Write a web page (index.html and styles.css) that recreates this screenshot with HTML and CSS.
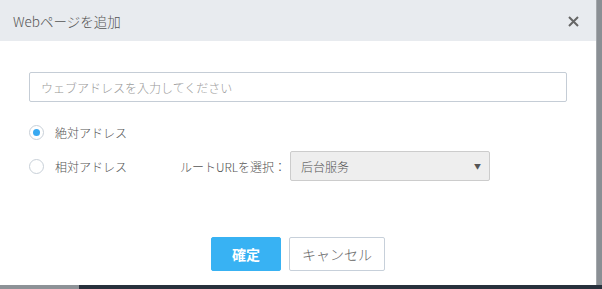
FILE: index.html
```html
<!DOCTYPE html>
<html lang="ja">
<head>
<meta charset="utf-8">
<title>Webページを追加</title>
<link rel="stylesheet" href="styles.css">
</head>
<body>
<div class="stage">
  <div class="dialog">
    <div class="header">
      <span class="title">Webページを追加</span>
      <svg class="close" width="11" height="11" viewBox="0 0 11 11"><path d="M1 1L10 10M10 1L1 10" stroke="#666" stroke-width="2" stroke-linecap="butt"/></svg>
    </div>
    <div class="body">
      <div class="input">ウェブアドレスを入力してください</div>
      <div class="row row-first">
        <span class="radio checked"></span>
        <span class="label">絶対アドレス</span>
      </div>
      <div class="row row-second">
        <span class="radio"></span>
        <span class="label label-rel">相対アドレス</span>
        <span class="label">ルートURLを選択：</span>
        <div class="select"><span>后台服务</span><span class="arrow">&#9660;</span></div>
      </div>
    </div>
    <div class="footer">
      <button class="btn primary">確定</button>
      <button class="btn">キャンセル</button>
    </div>
  </div>
  <div class="side"></div>
</div>
<div class="bottom"><div class="b1"></div><div class="b2"></div></div>
</body>
</html>
```
FILE: styles.css
```css
* { box-sizing: border-box; }
html, body { margin: 0; padding: 0; }
body {
  width: 602px;
  height: 289px;
  overflow: hidden;
  background: #8c9196;
  font-family: "Noto Sans CJK JP", "Noto Sans", sans-serif;
  color: #555;
}
.stage { display: flex; height: 285px; }
.dialog {
  width: 596px;
  height: 285px;
  background: #fff;
  display: flex;
  flex-direction: column;
}
.side { flex: 1; background: #8a8f94; border-left: 1px solid #a4a8ac; }
.bottom { display: flex; height: 4px; }
.b1 { width: 79px; background: #8d9297; }
.b2 { flex: 1; background: #28313c; }
.header {
  height: 41px;
  background: #e8ebef;
  display: flex;
  align-items: center;
  justify-content: space-between;
  padding: 0 17px 0 13px;
}
.title { font-size: 13.5px; color: #555; font-weight: 300; }
.close { display: block; margin-top: 1px; }
.body { padding: 31px 29px 0 29px; height: 196px; }
.input {
  width: 538px;
  height: 30px;
  border: 1px solid #c5cdd6;
  border-radius: 2px;
  padding: 0 11px;
  display: flex;
  align-items: center;
  font-size: 12px;
  color: #999;
  font-weight: 300;
}
.row { display: flex; align-items: center; }
.row-first { margin-top: 22px; height: 16px; }
.row-second { margin-top: 11px; height: 30px; }
.radio {
  width: 15px;
  height: 15px;
  border-radius: 50%;
  border: 1px solid #c8d0d8;
  margin-right: 11px;
  flex: none;
  position: relative;
}
.radio.checked::after {
  content: "";
  position: absolute;
  left: 3px; top: 3px;
  width: 7px; height: 7px;
  border-radius: 50%;
  background: #38a9f1;
}
.label { font-size: 12px; color: #555; font-weight: 300; }
.label-rel { width: 125px; }
.select {
  margin-left: 4px;
  width: 200px;
  height: 30px;
  background: #eee;
  border: 1px solid #ccc;
  border-radius: 2px;
  display: flex;
  align-items: center;
  justify-content: space-between;
  padding: 0 8px 0 10px;
  font-size: 12px;
  color: #555;
  font-weight: 300;
}
.arrow { font-size: 7px; color: #555; }
.footer {
  display: flex;
  justify-content: center;
  gap: 8px;
}
.btn {
  height: 34px;
  font-family: inherit;
  font-size: 14px;
  border: 1px solid #c7d0da;
  background: #fff;
  color: #666;
  border-radius: 2px;
  padding: 0 11px;
  width: 96px;
  font-weight: 300;
}
.btn.primary {
  width: 70px;
  background: #38b2f3;
  border-color: #38b2f3;
  color: #fff;
  font-weight: bold;
}
```
